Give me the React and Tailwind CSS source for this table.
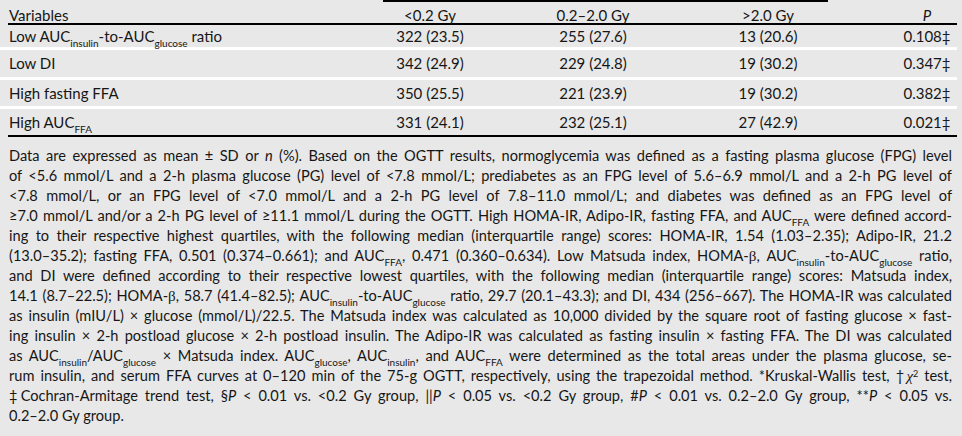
import React from 'react'

const Sub = ({ children }) => (
  <sub className="relative top-[1px] align-sub text-[10px] leading-none">{children}</sub>
)

const Auc = ({ s }) => (
  <>
    AUC<Sub>{s}</Sub>
  </>
)

const Beta = () => <span className="font-['Liberation_Serif'] text-[15px]">β</span>

const cols = 'grid grid-cols-[305px_234px_92px_258px_60px] items-center'

const rows = [
  {
    name: (
      <>
        Low <Auc s="insulin" />-to-<Auc s="glucose" /> ratio
      </>
    ),
    a: '322 (23.5)',
    b: '255 (27.6)',
    c: '13 (20.6)',
    p: '0.108‡',
    h: 'h-[22px]',
  },
  { name: 'Low DI', a: '342 (24.9)', b: '229 (24.8)', c: '19 (30.2)', p: '0.347‡', h: 'h-[27px]' },
  {
    name: 'High fasting FFA',
    a: '350 (25.5)',
    b: '221 (23.9)',
    c: '19 (30.2)',
    p: '0.382‡',
    h: 'h-[26px]',
  },
  {
    name: (
      <>
        High <Auc s="FFA" />
      </>
    ),
    a: '331 (24.1)',
    b: '232 (25.1)',
    c: '27 (42.9)',
    p: '0.021‡',
    h: 'h-[26px]',
  },
]

const lines = [
  <>
    Data are expressed as mean ± SD or <i>n</i> (%). Based on the OGTT results, normoglycemia was
    defined as a fasting plasma glucose (FPG) level
  </>,
  <>
    of &lt;5.6 mmol/L and a 2-h plasma glucose (PG) level of &lt;7.8 mmol/L; prediabetes as an FPG
    level of 5.6–6.9 mmol/L and a 2-h PG level of
  </>,
  <>
    &lt;7.8 mmol/L, or an FPG level of &lt;7.0 mmol/L and a 2-h PG level of 7.8–11.0 mmol/L; and
    diabetes was defined as an FPG level of
  </>,
  <>
    ≥7.0 mmol/L and/or a 2-h PG level of ≥11.1 mmol/L during the OGTT. High HOMA-IR, Adipo-IR,
    fasting FFA, and <Auc s="FFA" /> were defined accord-
  </>,
  <>
    ing to their respective highest quartiles, with the following median (interquartile range)
    scores: HOMA-IR, 1.54 (1.03–2.35); Adipo-IR, 21.2
  </>,
  <>
    (13.0–35.2); fasting FFA, 0.501 (0.374–0.661); and <Auc s="FFA" />, 0.471 (0.360–0.634). Low
    Matsuda index, HOMA-<Beta />, <Auc s="insulin" />-to-<Auc s="glucose" /> ratio,
  </>,
  <>
    and DI were defined according to their respective lowest quartiles, with the following median
    (interquartile range) scores: Matsuda index,
  </>,
  <>
    14.1 (8.7–22.5); HOMA-<Beta />, 58.7 (41.4–82.5); <Auc s="insulin" />-to-<Auc s="glucose" />{' '}
    ratio, 29.7 (20.1–43.3); and DI, 434 (256–667). The HOMA-IR was calculated
  </>,
  <>
    as insulin (mIU/L) × glucose (mmol/L)/22.5. The Matsuda index was calculated as 10,000 divided
    by the square root of fasting glucose × fast-
  </>,
  <>
    ing insulin × 2-h postload glucose × 2-h postload insulin. The Adipo-IR was calculated as
    fasting insulin × fasting FFA. The DI was calculated
  </>,
  <>
    as <Auc s="insulin" />/<Auc s="glucose" /> × Matsuda index. <Auc s="glucose" />,{' '}
    <Auc s="insulin" />, and <Auc s="FFA" /> were determined as the total areas under the plasma
    glucose, se-
  </>,
  <>
    rum insulin, and serum FFA curves at 0–120 min of the 75-g OGTT, respectively, using the
    trapezoidal method. *Kruskal-Wallis test, †
    <span className="font-['Liberation_Serif'] text-[15px] italic">χ</span>
    <sup className="text-[9px]">2</sup> test,
  </>,
  <>
    ‡Cochran-Armitage trend test, §<i>P</i> &lt; 0.01 vs. &lt;0.2 Gy group, ||<i>P</i> &lt; 0.05
    vs. &lt;0.2 Gy group, #<i>P</i> &lt; 0.01 vs. 0.2–2.0 Gy group, **<i>P</i> &lt; 0.05 vs.
  </>,
]

export default function App() {
  return (
    <div className="h-[436px] w-[962px] overflow-hidden bg-[#e8e8e8] font-['Lato',sans-serif] text-[15px] text-[#161616]">
      <div className="ml-[383px] h-[2px] w-[445px] bg-black" />

      <div className="ml-2 w-[949px]">
        <div className={`${cols} h-[23px] border-b-2 border-black pt-[2px]`}>
          <div className="pl-px">Variables</div>
          <div className="text-center">&lt;0.2 Gy</div>
          <div className="text-center">0.2–2.0 Gy</div>
          <div className="text-center">&gt;2.0 Gy</div>
          <div className="text-center italic">P</div>
        </div>
      </div>

      {rows.map((r, i) => (
        <div key={i}>
          {i > 0 && <div className="h-[3px] w-[957px] bg-white" />}
          <div className="ml-2 w-[949px]">
            <div className={`${cols} ${r.h}`}>
              <div className="pl-px whitespace-nowrap">{r.name}</div>
              <div className="text-center">{r.a}</div>
              <div className="text-center">{r.b}</div>
              <div className="text-center">{r.c}</div>
              <div className="text-center">{r.p}</div>
            </div>
          </div>
        </div>
      ))}

      <div className="ml-2 h-[2px] w-[949px] bg-black" />

      <div className="mt-[9px] ml-[9px] w-[943px] text-[14.6px] leading-[20px]">
        {lines.map((l, i) => (
          <div key={i} className="whitespace-nowrap text-justify [text-align-last:justify]">
            {l}
          </div>
        ))}
        <div>0.2–2.0 Gy group.</div>
      </div>
    </div>
  )
}
